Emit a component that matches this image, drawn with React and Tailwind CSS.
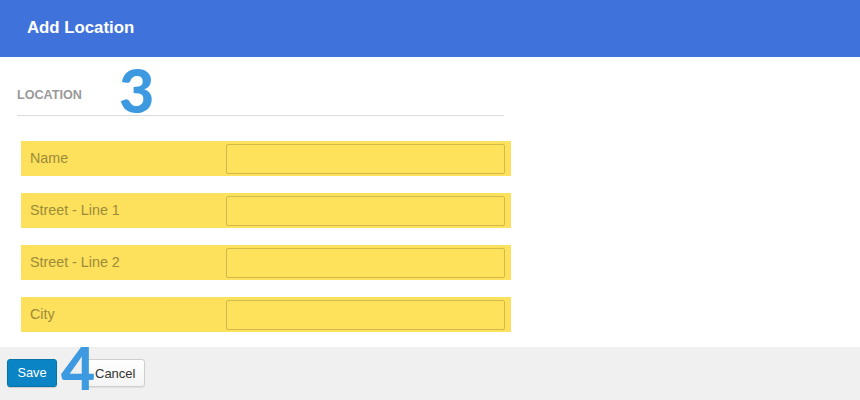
import React from "react";

const rows = ["Name", "Street - Line 1", "Street - Line 2", "City"];

export default function App() {
  return (
    <div className="relative w-[860px] h-[400px] flex flex-col bg-white overflow-hidden font-['Liberation_Sans',Arial,sans-serif]">
      <div className="h-[57px] shrink-0 bg-[#3f73db] flex items-center px-[27px]">
        <span className="text-white font-bold text-[16.8px] leading-none">Add Location</span>
      </div>
      <div className="flex-1 flex flex-col">
        <div className="mx-[17px] w-[487px] pt-[31px] pb-[12px] border-b border-[#dcdcdc]">
          <span className="block text-[12.6px] leading-[15px] font-bold text-[#999999] uppercase">Location</span>
        </div>
        <div className="ml-[21px] w-[490px] mt-[25px] flex flex-col gap-[17px]">
          {rows.map((r) => (
            <div key={r} className="h-[35px] bg-[#fde05b] flex items-center">
              <div className="w-[205px] pl-[9px] text-[14.3px] text-[#9c8b3a]">{r}</div>
              <div className="w-[279px] h-[30px] border border-[#d2b94c] rounded-[2px] bg-[#fee25c]" />
            </div>
          ))}
        </div>
      </div>
      <div className="h-[53px] shrink-0 bg-[#f0f0f0] flex items-start pt-[12px] pl-[7px]">
        <button className="w-[50px] h-[28px] bg-[#0a84c4] border border-[#0873a9] rounded-[3px] text-white text-[12.8px] leading-none shadow-[0_1px_1px_rgba(0,0,0,0.15)]">
          Save
        </button>
        <button className="ml-[26px] w-[62px] h-[28px] bg-gradient-to-b from-white to-[#f4f4f4] border border-[#cfcfcf] rounded-[3px] text-[#333] text-[13px] leading-none pl-[11px] text-left shadow-[0_1px_1px_rgba(0,0,0,0.08)]">
          Cancel
        </button>
      </div>
      <span className="absolute left-[119px] top-[59px] text-[61px] leading-none font-black text-[#3d9ae0] font-['Lato',sans-serif]">3</span>
      <span className="absolute left-[61px] top-[343px] text-[59px] leading-[50px] font-black text-[#3d9ae0] font-['Lato',sans-serif]">4</span>
    </div>
  );
}
